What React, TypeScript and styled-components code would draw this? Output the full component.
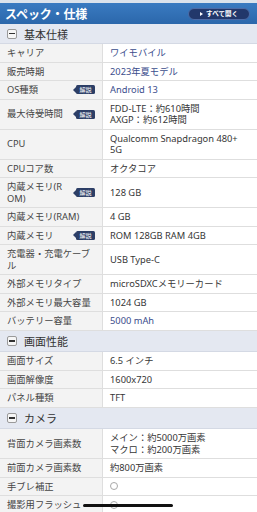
import React from "react";
import styled, { createGlobalStyle } from "styled-components";

const GlobalStyle = createGlobalStyle`
  html, body { margin: 0; padding: 0; background: #ffffff; }
  body {
    width: 257px;
    height: 512px;
    overflow: hidden;
    font-family: "Noto Sans", "Noto Sans CJK JP", sans-serif;
  }
`;

const Page = styled.div`
  width: 257px;
  display: flex;
  flex-direction: column;
`;

const TopStrip = styled.div`
  height: 3px;
  background: #dbe3ec;
`;

const Header = styled.div`
  height: 21px;
  display: flex;
  align-items: center;
  justify-content: space-between;
  padding: 0 7px 0 5px;
  background: linear-gradient(#3a7bc1, #2b67ab);
`;

const Title = styled.h1`
  margin: 0;
  font-family: "Noto Sans CJK JP", sans-serif;
  font-size: 12px;
  font-weight: 700;
  color: #ffffff;
  letter-spacing: -0.1px;
`;

const OpenAll = styled.button`
  width: 62px;
  height: 12px;
  border-radius: 6px;
  border: 1px solid #4c6ba6;
  background: #22386b;
  color: #ffffff;
  display: flex;
  align-items: center;
  justify-content: center;
  gap: 3px;
  padding: 0;
  font-family: "Noto Sans CJK JP", sans-serif;
  font-size: 6.5px;
  font-weight: 700;
  line-height: 1;
`;

const Tri = styled.span`
  width: 0;
  height: 0;
  border-left: 3.5px solid #ffffff;
  border-top: 2.5px solid transparent;
  border-bottom: 2.5px solid transparent;
`;

const SectionHead = styled.div<{ $h: number }>`
  height: ${(p) => p.$h}px;
  box-sizing: border-box;
  display: flex;
  align-items: center;
  gap: 7px;
  padding-left: 7px;
  background: #e4e8f1;
  border-bottom: 1px solid #d4d9e4;
  font-family: "Noto Sans CJK JP", sans-serif;
  font-size: 11px;
  color: #333333;
`;

const MinusBox = styled.span`
  width: 10px;
  height: 10px;
  box-sizing: border-box;
  border: 1px solid #9a9a9a;
  border-radius: 2px;
  background: #f6f6f6;
  display: flex;
  align-items: center;
  justify-content: center;
  &::after {
    content: "";
    width: 6px;
    height: 1.6px;
    background: #333333;
  }
`;

const Row = styled.div`
  display: grid;
  grid-template-columns: 103px 1fr;
  border-bottom: 1px solid #dedede;
`;

const LabelCell = styled.div`
  background: #f3f3f3;
  border-right: 1px solid #dedede;
  padding: 3px 6px 3px 7px;
  display: flex;
  align-items: center;
  font-size: 9.3px;
  line-height: 11.5px;
  color: #454545;
`;

const Label = styled.span`
  flex: 1;
  min-width: 0;
  word-break: break-all;
`;

const Badge = styled.span`
  flex: none;
  position: relative;
  height: 9px;
  padding: 0 3px;
  margin: 0 1.5px 0 9px;
  background: #2c3e66;
  border-radius: 1.5px;
  color: #ffffff;
  font-family: "Noto Sans CJK JP", sans-serif;
  font-size: 6px;
  line-height: 9px;
  &::before {
    content: "";
    position: absolute;
    left: -3px;
    top: 1.5px;
    border-right: 3px solid #2c3e66;
    border-top: 3px solid transparent;
    border-bottom: 3px solid transparent;
  }
`;

const ValueCell = styled.div<{ $link?: boolean }>`
  padding: 3px 6px 3px 7px;
  display: flex;
  flex-direction: column;
  justify-content: center;
  font-size: 9.3px;
  line-height: 11.5px;
  color: ${(p) => (p.$link ? "#3b4d8c" : "#363636")};
`;

const Line = styled.span`
  display: block;
`;

const Circle = styled.span`
  display: block;
  width: 8px;
  height: 8px;
  box-sizing: border-box;
  border: 1px solid #a8a8a8;
  border-radius: 50%;
`;

const HomeIndicator = styled.div`
  position: fixed;
  left: 83px;
  bottom: 5px;
  width: 90px;
  height: 3.5px;
  border-radius: 2px;
  background: #111111;
`;

type Spec = {
  label: string;
  value?: string[];
  link?: boolean;
  badge?: boolean;
  circle?: boolean;
};

type Section = { title: string; h: number; rows: Spec[] };

const sections: Section[] = [
  {
    title: "基本仕様",
    h: 20,
    rows: [
      { label: "キャリア", value: ["ワイモバイル"], link: true },
      { label: "販売時期", value: ["2023年夏モデル"], link: true },
      { label: "OS種類", value: ["Android 13"], link: true, badge: true },
      { label: "最大待受時間", value: ["FDD-LTE：約610時間", "AXGP：約612時間"], badge: true },
      { label: "CPU", value: ["Qualcomm Snapdragon 480+ 5G"] },
      { label: "CPUコア数", value: ["オクタコア"] },
      { label: "内蔵メモリ(ROM)", value: ["128 GB"], badge: true },
      { label: "内蔵メモリ(RAM)", value: ["4 GB"] },
      { label: "内蔵メモリ", value: ["ROM 128GB RAM 4GB"], badge: true },
      { label: "充電器・充電ケーブル", value: ["USB Type-C"] },
      { label: "外部メモリタイプ", value: ["microSDXCメモリーカード"] },
      { label: "外部メモリ最大容量", value: ["1024 GB"] },
      { label: "バッテリー容量", value: ["5000 mAh"], link: true },
    ],
  },
  {
    title: "画面性能",
    h: 21.5,
    rows: [
      { label: "画面サイズ", value: ["6.5 インチ"] },
      { label: "画面解像度", value: ["1600x720"] },
      { label: "パネル種類", value: ["TFT"] },
    ],
  },
  {
    title: "カメラ",
    h: 21.5,
    rows: [
      { label: "背面カメラ画素数", value: ["メイン：約5000万画素", "マクロ：約200万画素"] },
      { label: "前面カメラ画素数", value: ["約800万画素"] },
      { label: "手ブレ補正", circle: true },
      { label: "撮影用フラッシュ", circle: true },
    ],
  },
];

export default function App() {
  return (
    <>
      <GlobalStyle />
      <Page>
        <TopStrip />
        <Header>
          <Title>スペック・仕様</Title>
          <OpenAll>
            <Tri />
            すべて開く
          </OpenAll>
        </Header>
        {sections.map((s) => (
          <React.Fragment key={s.title}>
            <SectionHead $h={s.h}>
              <MinusBox />
              {s.title}
            </SectionHead>
            {s.rows.map((r) => (
              <Row key={r.label}>
                <LabelCell>
                  <Label>{r.label}</Label>
                  {r.badge && <Badge>解説</Badge>}
                </LabelCell>
                <ValueCell $link={r.link}>
                  {r.circle ? (
                    <Circle />
                  ) : (
                    r.value?.map((v) => <Line key={v}>{v}</Line>)
                  )}
                </ValueCell>
              </Row>
            ))}
          </React.Fragment>
        ))}
      </Page>
      <HomeIndicator />
    </>
  );
}
